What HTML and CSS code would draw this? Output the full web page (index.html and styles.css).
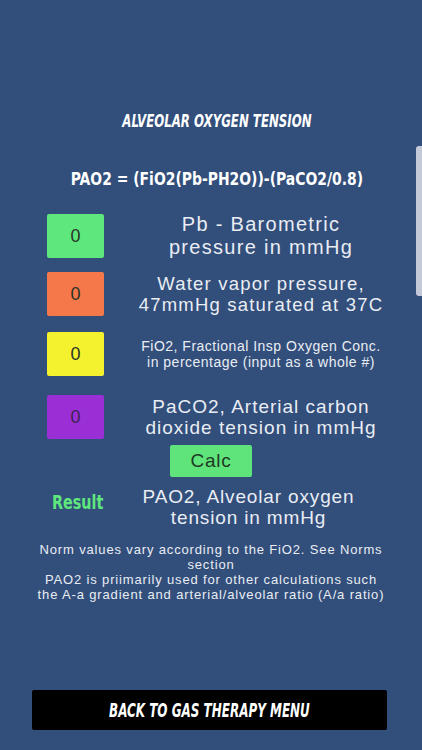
FILE: index.html
```html
<!DOCTYPE html>
<html>
<head>
<meta charset="utf-8">
<link rel="stylesheet" href="styles.css">
</head>
<body>
<div class="page">
  <div class="title"><span class="squeeze sq-title">ALVEOLAR OXYGEN TENSION</span></div>
  <div class="formula"><span class="squeeze sq-formula">PAO2 = (FiO2(Pb-PH2O))-(PaCO2/0.8)</span></div>

  <div class="row row-1">
    <div class="box green">0</div>
    <div class="desc d1">Pb - Barometric<br>pressure in mmHg</div>
  </div>
  <div class="row row-2">
    <div class="box orange">0</div>
    <div class="desc d2">Water vapor pressure,<br>47mmHg saturated at 37C</div>
  </div>
  <div class="row row-3">
    <div class="box yellow">0</div>
    <div class="desc d3">FiO2, Fractional Insp Oxygen Conc.<br>in percentage (input as a whole #)</div>
  </div>
  <div class="row row-4">
    <div class="box purple">0</div>
    <div class="desc d4">PaCO2, Arterial carbon<br>dioxide tension in mmHg</div>
  </div>

  <div class="calc-wrap"><div class="calc">Calc</div></div>

  <div class="row result-row">
    <div class="result"><span class="squeeze sq-result">Result</span></div>
    <div class="desc d5">PAO2, Alveolar oxygen<br>tension in mmHg</div>
  </div>

  <div class="notes">
    Norm values vary according to the FiO2. See Norms<br>section<br>PAO2 is priimarily used for other calculations such<br>the A-a gradient and arterial/alveolar ratio (A/a ratio)
  </div>

  <div class="back"><span class="squeeze sq-back">BACK TO GAS THERAPY MENU</span></div>
</div>
<div class="scrollbar"></div>
</body>
</html>
```

FILE: styles.css
```css
html, body {
  margin: 0;
  padding: 0;
}
body {
  background: #324e7b;
  width: 422px;
  height: 750px;
  overflow: hidden;
  position: relative;
  font-family: "Liberation Sans", Arial, sans-serif;
  color: #e9edf3;
}
.page {
  display: flex;
  flex-direction: column;
  height: 750px;
  box-sizing: border-box;
  padding-top: 111px;
  padding-bottom: 20px;
}
.squeeze {
  display: inline-block;
  white-space: nowrap;
  transform-origin: center center;
}
.title {
  font-family: "DejaVu Sans Condensed", "DejaVu Sans", sans-serif;
  font-weight: bold;
  font-style: italic;
  font-size: 17px;
  line-height: 20px;
  text-align: center;
  color: #ffffff;
  padding-left: 12px;
}
.sq-title { transform: scaleX(0.77); }
.formula {
  margin-top: 37px;
  font-family: "DejaVu Sans Condensed", "DejaVu Sans", sans-serif;
  font-weight: bold;
  font-size: 18px;
  line-height: 22px;
  text-align: center;
  color: #ffffff;
  padding-left: 12px;
}
.sq-formula { transform: scaleX(0.86); }
.row {
  display: grid;
  grid-template-columns: 57px 1fr;
  column-gap: 16px;
  padding-left: 47px;
  padding-right: 20px;
  align-items: center;
}
.row-1 { margin-top: 23px; }
.row-2 { margin-top: 13px; }
.row-3 { margin-top: 16px; }
.row-4 { margin-top: 19px; }
.box {
  height: 44px;
  border-radius: 2px;
  display: flex;
  align-items: center;
  justify-content: center;
  font-size: 18px;
  color: #2b3328;
}
.green { background: #5ee77d; }
.orange { background: #f5784a; }
.yellow { background: #f4f12f; }
.purple { background: #9a2fd6; color: #3d2350; }
.desc {
  text-align: center;
  white-space: nowrap;
}
.d1 { font-size: 20px; line-height: 23px; letter-spacing: 1.3px; }
.d2 { font-size: 18.5px; line-height: 21px; letter-spacing: 1.2px; }
.d3 { font-size: 14px; line-height: 16px; letter-spacing: 0.5px; }
.d4 { font-size: 19px; line-height: 21px; letter-spacing: 1px; }
.d5 { font-size: 19px; line-height: 21px; letter-spacing: 0.85px; margin-right: 25px; }
.calc-wrap {
  display: flex;
  justify-content: center;
  margin-top: 6px;
}
.calc {
  width: 82px;
  height: 32px;
  background: #5ee47a;
  border-radius: 2px;
  display: flex;
  align-items: center;
  justify-content: center;
  font-size: 19px;
  letter-spacing: 0.8px;
  color: #1f3a24;
}
.result-row {
  margin-top: 9px;
  align-items: start;
}
.result {
  font-family: "DejaVu Sans Condensed", "DejaVu Sans", sans-serif;
  font-weight: bold;
  font-size: 19px;
  line-height: 22px;
  padding-top: 5px;
  text-align: center;
  color: #5ee77d;
}
.sq-result { transform: scaleX(0.84); }
.notes {
  margin-top: 14px;
  text-align: center;
  font-size: 13px;
  line-height: 15px;
  letter-spacing: 0.85px;
  color: #e9edf3;
  white-space: nowrap;
}
.back {
  margin: auto 35px 0 32px;
  height: 40px;
  background: #000000;
  border-radius: 2px;
  display: flex;
  align-items: center;
  justify-content: center;
  font-family: "DejaVu Sans Condensed", "DejaVu Sans", sans-serif;
  font-weight: bold;
  font-style: italic;
  font-size: 19px;
  color: #ffffff;
}
.sq-back { transform: scaleX(0.7); }
.scrollbar {
  position: absolute;
  right: 0;
  top: 146px;
  width: 6px;
  height: 150px;
  background: #c4cad8;
  border-radius: 3px 0 0 3px;
}
```
